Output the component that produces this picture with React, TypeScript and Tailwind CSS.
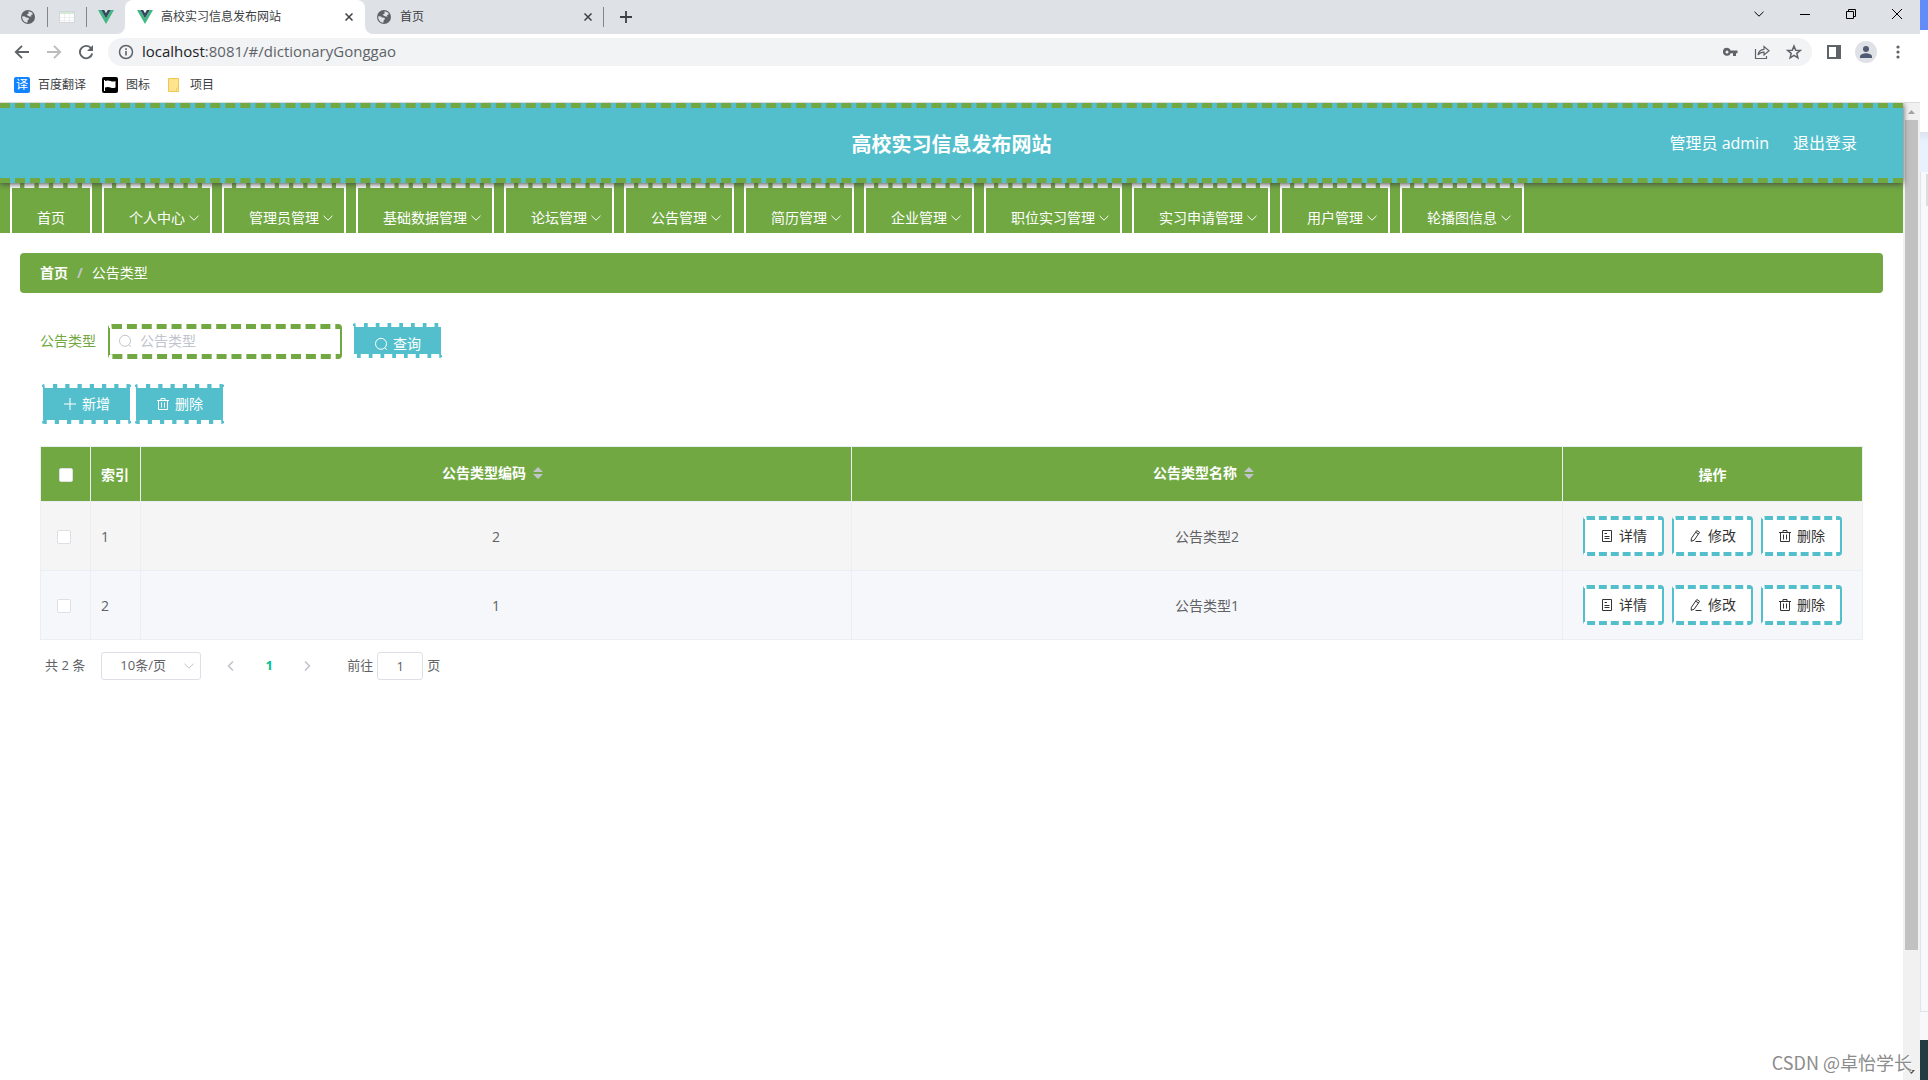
import React from "react";

type IconProps = { className?: string };

const stroke = {
  fill: "none",
  stroke: "currentColor",
  strokeLinecap: "butt" as const,
  strokeLinejoin: "miter" as const,
};

/* ---------- browser icons ---------- */

const Globe = ({ className = "size-4" }: IconProps) => (
  <svg viewBox="0 0 16 16" className={className} aria-hidden="true">
    <circle cx="8" cy="8" r="7" fill="#5f6368" />
    <path
      d="M2.200 7.200 5 7.400 6 8.600 8.400 8.800 9 10 7.600 11.600 7.400 13.800C4.500 13.600 2.200 11 2.200 8ZM8.500 2.200 11.500 3.200 13 5 11 6.200 11.500 7.400 9.500 7.600 7.600 6.400 6.600 5.800 8.600 4.600Z"
      fill="#dee1e6"
    />
  </svg>
);

const Vue = ({ className = "size-4" }: IconProps) => (
  <svg viewBox="0 0 16 16" className={className} aria-hidden="true">
    <path d="M0 1h3.200L8 9.300 12.800 1H16L8 15Z" fill="#41b883" />
    <path d="M3.200 1H6.200L8 4.200 9.800 1h3L8 9.300Z" fill="#35495e" />
  </svg>
);

const Sheet = () => (
  <svg viewBox="0 0 16 16" className="size-4" aria-hidden="true">
    <rect x="0.500" y="2.500" width="15" height="11" fill="#fff" stroke="#d3d6da" />
    <rect x="1" y="3" width="14" height="2" fill="#d3e8d5" />
    <path d="M1 8.500h14M1 11.500h14M5.500 5v8M10.500 5v8" stroke="#eceef0" fill="none" />
  </svg>
);

const Cross = ({ className = "size-2" }: IconProps) => (
  <svg viewBox="0 0 8 8" className={className} aria-hidden="true">
    <path d="M0.500 0.500 7.500 7.500M7.500 0.500 0.500 7.500" {...stroke} strokeWidth="1.500" />
  </svg>
);

const Plus = () => (
  <svg viewBox="0 0 12 12" className="size-3" aria-hidden="true">
    <path d="M6 0v12M0 6h12" {...stroke} strokeWidth="1.800" />
  </svg>
);

const Arrow = ({ className = "size-4" }: IconProps) => (
  <svg viewBox="0 0 16 16" className={className} aria-hidden="true">
    <path d="M15 8H2.500M8 1.800 1.800 8 8 14.200" {...stroke} strokeWidth="1.900" />
  </svg>
);

const Reload = () => (
  <svg viewBox="0 0 16 16" className="size-4" aria-hidden="true">
    <path d="M13.200 4.500A6.200 6.200 0 1 0 14.200 9.500" {...stroke} strokeWidth="1.900" />
    <path d="M15 1v6H9Z" fill="currentColor" />
  </svg>
);

const Info = () => (
  <svg viewBox="0 0 16 16" className="size-4" aria-hidden="true">
    <circle cx="8" cy="8" r="6.500" {...stroke} strokeWidth="1.500" />
    <path d="M8 7v4.500M8 4.300v1.700" {...stroke} strokeWidth="1.600" />
  </svg>
);

const Key = () => (
  <svg viewBox="0 0 16 16" className="size-4" aria-hidden="true">
    <path
      fillRule="evenodd"
      d="M5 3.800a4 4 0 1 0 3.700 5.400H11V12h3V9.200h1.500V6.600H8.700A4 4 0 0 0 5 3.800Zm0 2.600a1.500 1.500 0 1 1 0 3 1.500 1.500 0 0 1 0-3Z"
      fill="currentColor"
    />
  </svg>
);

const Share = () => (
  <svg viewBox="0 0 16 16" className="size-4" aria-hidden="true">
    <path d="M1.500 5v9.500h11V12" {...stroke} strokeWidth="1.200" />
    <path d="M4 11C4.500 7.500 6.500 5.500 10 5.300V2.500L15 6.800 10 11V8.200C7.500 8.200 5.500 9 4 11Z" {...stroke} strokeWidth="1.200" />
  </svg>
);

const Star = () => (
  <svg viewBox="0 0 16 16" className="size-4" aria-hidden="true">
    <path d="M8 2 9.700 6.200 14.300 6.500 10.800 9.400 11.900 13.800 8 11.400 4.100 13.800 5.200 9.400 1.700 6.500 6.300 6.200Z" {...stroke} strokeWidth="1.500" />
  </svg>
);

const SidePanel = () => (
  <svg viewBox="0 0 14 14" className="size-3.5" aria-hidden="true">
    <path fillRule="evenodd" d="M0 0h14v14H0ZM2 2v10h7V2Z" fill="currentColor" />
  </svg>
);

const Avatar = () => (
  <svg viewBox="0 0 22 22" className="size-[22px]" aria-hidden="true">
    <circle cx="11" cy="11" r="11" fill="#dee1e6" />
    <circle cx="11" cy="8" r="3" fill="#4f5b73" />
    <path d="M5 17v-1.500C5 13 9 12.200 11 12.200s6 .8 6 3.300V17Z" fill="#4f5b73" />
  </svg>
);

const Dots = () => (
  <svg viewBox="0 0 4 14" className="h-3.5 w-1" aria-hidden="true">
    <circle cx="2" cy="2" r="1.600" fill="currentColor" />
    <circle cx="2" cy="7" r="1.600" fill="currentColor" />
    <circle cx="2" cy="12" r="1.600" fill="currentColor" />
  </svg>
);

/* ---------- application icons ---------- */

const Chevron = ({ className = "size-3" }: IconProps) => (
  <svg viewBox="0 0 12 12" className={className} aria-hidden="true">
    <path d="M1.500 3.800 6 8.200 10.500 3.800" {...stroke} strokeWidth="1" />
  </svg>
);

const Search = () => (
  <svg viewBox="0 0 14 14" className="size-3.5 shrink-0" aria-hidden="true">
    <circle cx="7" cy="6.800" r="5.500" {...stroke} />
    <path d="M10.800 10.800 12.800 12.800" {...stroke} />
  </svg>
);

const Add = () => (
  <svg viewBox="0 0 14 14" className="size-3.5 shrink-0" aria-hidden="true">
    <path d="M7 1v12M1 7h12" {...stroke} />
  </svg>
);

const Trash = () => (
  <svg viewBox="0 0 14 14" className="size-3.5 shrink-0" aria-hidden="true">
    <path d="M1 3.500h12M2.500 3.500v9h9v-9M5 3.500v-2h4v2M5.500 5.500v5M8.500 5.500v5" {...stroke} />
  </svg>
);

const Doc = () => (
  <svg viewBox="0 0 14 14" className="size-3.5 shrink-0" aria-hidden="true">
    <path d="M2.500 1.500h9v11h-9ZM4.500 4.500h2.500M4.500 7.500h5M4.500 9.500h5" {...stroke} />
  </svg>
);

const Edit = () => (
  <svg viewBox="0 0 14 14" className="size-3.5 shrink-0" aria-hidden="true">
    <path d="M7.800 1.500 10.600 3.300 5.200 11.200 2.200 12.300 2.400 9.300ZM6.700 3.200 9.500 5M6.500 12.500h6" {...stroke} />
  </svg>
);

/* ---------- data ---------- */

const menus = [
  "个人中心",
  "管理员管理",
  "基础数据管理",
  "论坛管理",
  "公告管理",
  "简历管理",
  "企业管理",
  "职位实习管理",
  "实习申请管理",
  "用户管理",
  "轮播图信息",
];

const rows = [
  { id: 1, code: "2", name: "公告类型2" },
  { id: 2, code: "1", name: "公告类型1" },
];

/* ---------- browser frame ---------- */

function TabStrip() {
  return (
    <div className="flex h-[34px] items-center bg-[#dee1e6] text-xs text-[#3c4043]">
      <button aria-label="标签页 1" className="flex w-[47px] justify-center pl-2">
        <Globe />
      </button>
      <span className="h-5 w-px bg-[#80868b]" />
      <button aria-label="标签页 2" className="flex w-[38px] justify-center">
        <Sheet />
      </button>
      <span className="h-5 w-px bg-[#80868b]" />
      <button aria-label="标签页 3" className="flex w-[38px] justify-center">
        <Vue />
      </button>
      <div className="relative flex h-full w-60 items-center rounded-t-lg bg-white px-3">
        <span className="absolute bottom-0 -left-2 size-2 bg-white">
          <span className="block size-2 rounded-br-lg bg-[#dee1e6]" />
        </span>
        <Vue />
        <span className="ml-2 flex-1">高校实习信息发布网站</span>
        <button aria-label="关闭标签页" className="text-[#3c4043]">
          <Cross />
        </button>
        <span className="absolute -right-2 bottom-0 size-2 bg-white">
          <span className="block size-2 rounded-bl-lg bg-[#dee1e6]" />
        </span>
      </div>
      <div className="flex h-full w-[238px] items-center px-[11px]">
        <Globe />
        <span className="ml-2 flex-1">首页</span>
        <button aria-label="关闭标签页">
          <Cross />
        </button>
      </div>
      <span className="h-5 w-px bg-[#80868b]" />
      <button aria-label="新标签页" className="ml-4">
        <Plus />
      </button>
      <div className="mb-1.5 ml-auto flex text-black">
        <button aria-label="搜索标签页" className="flex w-[46px] items-center justify-center">
          <Chevron />
        </button>
        <button aria-label="最小化" className="flex w-[46px] items-center justify-center">
          <svg viewBox="0 0 10 10" className="size-2.5" aria-hidden="true">
            <path d="M0 5.500h10" {...stroke} />
          </svg>
        </button>
        <button aria-label="还原" className="flex w-[46px] items-center justify-center">
          <svg viewBox="0 0 10 10" className="size-2.5" aria-hidden="true">
            <path d="M0.500 2.500h7v7h-7ZM2.500 2.500v-2h7v7h-2" {...stroke} />
          </svg>
        </button>
        <button aria-label="关闭" className="flex w-[46px] items-center justify-center">
          <svg viewBox="0 0 10 10" className="size-2.5" aria-hidden="true">
            <path d="M0 0 10 10M10 0 0 10" {...stroke} />
          </svg>
        </button>
      </div>
    </div>
  );
}

function Toolbar() {
  return (
    <div className="flex h-9 items-center bg-white pr-5 pl-3.5 text-[#5f6368]">
      <button aria-label="后退">
        <Arrow />
      </button>
      <button aria-label="前进" className="ml-4 text-[#babcbe]">
        <Arrow className="size-4 rotate-180" />
      </button>
      <button aria-label="重新加载" className="ml-4">
        <Reload />
      </button>
      <div className="ml-3.5 flex h-7 flex-1 items-center rounded-full bg-[#f1f3f4] px-2.5">
        <Info />
        <a href="#/dictionaryGonggao" className="ml-2 flex-1 pb-0.5 text-[15px] leading-5">
          <span className="text-[#202124]">localhost</span>:8081/#/dictionaryGonggao
        </a>
        <div className="flex gap-4">
          <button aria-label="密码">
            <Key />
          </button>
          <button aria-label="分享">
            <Share />
          </button>
          <button aria-label="收藏">
            <Star />
          </button>
        </div>
      </div>
      <button aria-label="侧边栏" className="ml-[15px]">
        <SidePanel />
      </button>
      <button aria-label="用户" className="ml-3.5">
        <Avatar />
      </button>
      <button aria-label="更多" className="ml-[19px]">
        <Dots />
      </button>
    </div>
  );
}

function Bookmarks() {
  return (
    <div className="relative z-20 flex h-[33px] items-center border-b border-[#d9dbdd] bg-white pb-0.5 pl-3.5 text-xs text-[#3c4043]">
      <a href="#fanyi" className="flex items-center gap-2">
        <span className="flex size-4 items-center justify-center rounded-xs bg-[#1283ff] text-xs text-white">译</span>
        百度翻译
      </a>
      <a href="#icons" className="ml-4 flex items-center gap-2">
        <svg viewBox="0 0 16 16" className="size-4" aria-hidden="true">
          <rect width="16" height="16" rx="2" fill="#000" />
          <path d="M2.500 3v11" stroke="#fff" />
          <path d="M3 4Q6 3 8.500 4 11 5 13.500 4v6.500Q11 11.500 8.500 10.500 6 9.500 3 10.500Z" fill="#fff" />
        </svg>
        图标
      </a>
      <a href="#projects" className="ml-4 flex items-center gap-2">
        <svg viewBox="0 0 16 16" className="size-4" aria-hidden="true">
          <path d="M2.500 1.500h10v13h-10Z" fill="#ffe38f" stroke="#efc850" />
          <path d="M10.500 14.500v-3l2-1v4Z" fill="#fff0b8" stroke="#efc850" />
        </svg>
        项目
      </a>
    </div>
  );
}

/* ---------- page ---------- */

const navItem =
  "flex h-[50px] items-center border-x-2 border-t-[5px] border-x-white border-t-white [border-top-style:dashed] pt-[15px] pl-[25px] text-sm text-white";

function SiteHeader() {
  return (
    <header className="relative z-10 grid h-20 grid-cols-[1fr_auto_1fr] items-center border-y-[5px] border-dashed border-[#71a842] bg-[#54bfcc] text-base text-white shadow-[0_1px_6px_#444]">
      <span />
      <h1 className="pt-1 text-xl font-bold">高校实习信息发布网站</h1>
      <div className="flex justify-end gap-6 pr-[46px]">
        <span>管理员 admin</span>
        <a href="#/login">退出登录</a>
      </div>
    </header>
  );
}

function SiteNav() {
  return (
    <nav className="flex gap-2.5 bg-[#71a842] px-2.5">
      <a href="#/" className={navItem + " pr-[25px]"}>
        首页
      </a>
      {menus.map((m) => (
        <button key={m} className={navItem + " pr-2.5"}>
          <span className="mr-[3px] whitespace-nowrap">{m}</span>
          <Chevron />
        </button>
      ))}
    </nav>
  );
}

const solidBtn =
  "flex items-center gap-[5px] rounded border-x-2 border-y-4 border-white bg-[#54bfcc] px-5 text-sm text-white [border-block-style:dashed]";

function ActionButton({ icon, label }: { icon: React.ReactNode; label: string }) {
  return (
    <button className="flex h-10 items-center gap-[5px] rounded border-x-2 border-y-4 border-[#54bfcc] bg-white px-[15px] text-[#333] [border-block-style:dashed]">
      {icon}
      {label}
    </button>
  );
}

const checkbox = "block size-3.5 appearance-none rounded-xs border border-[#dcdfe6] bg-white";
const headCell = "h-[55px] border-r border-b border-[#ebeef5] font-bold";
const bodyCell = "h-[69px] border-r border-b border-[#ebeef5]";

function SortHead({ label }: { label: string }) {
  return (
    <span className="flex items-center justify-center">
      {label}
      <button aria-label={label + "排序"} className="flex w-6 justify-center">
        <svg viewBox="0 0 10 12" className="h-3 w-2.5" aria-hidden="true">
          <path d="M0 5 5 0l5 5ZM0 7h10L5 12Z" fill="#c0c4cc" />
        </svg>
      </button>
    </span>
  );
}

function DataTable() {
  return (
    <table className="mt-[22px] w-full table-fixed border-separate border-spacing-0 border-t border-l border-[#ebeef5] text-sm text-[#606266]">
      <colgroup>
        <col className="w-[50px]" />
        <col className="w-[50px]" />
        <col />
        <col />
        <col className="w-[300px]" />
      </colgroup>
      <thead className="bg-[#71a842] text-white">
        <tr>
          <th className={headCell + " pt-0.5 pl-[18px]"}>
            <input type="checkbox" aria-label="全选" className={checkbox} />
          </th>
          <th className={headCell + " pt-0.5 pl-2.5 text-left"}>索引</th>
          <th className={headCell + " pb-0.5"}>
            <SortHead label="公告类型编码" />
          </th>
          <th className={headCell + " pb-0.5"}>
            <SortHead label="公告类型名称" />
          </th>
          <th className={headCell + " pt-0.5"}>操作</th>
        </tr>
      </thead>
      <tbody>
        {rows.map((r) => (
          <tr key={r.id} className="odd:bg-[#f5f5f5] even:bg-[#f5f7fa]">
            <td className={bodyCell + " pt-0.5 pl-4"}>
              <input type="checkbox" aria-label={"选择第" + r.id + "行"} className={checkbox} />
            </td>
            <td className={bodyCell + " pt-0.5 pl-2.5"}>{r.id}</td>
            <td className={bodyCell + " pt-0.5 text-center"}>{r.code}</td>
            <td className={bodyCell + " pt-0.5 text-center"}>{r.name}</td>
            <td className={bodyCell}>
              <div className="flex justify-center gap-2">
                <ActionButton icon={<Doc />} label="详情" />
                <ActionButton icon={<Edit />} label="修改" />
                <ActionButton icon={<Trash />} label="删除" />
              </div>
            </td>
          </tr>
        ))}
      </tbody>
    </table>
  );
}

function Pagination() {
  return (
    <div className="mt-3 flex h-7 items-center pl-[5px] text-[13px] text-[#606266]">
      <span>共 2 条</span>
      <div className="relative ml-4 text-[#606266]">
        <select
          aria-label="每页条数"
          className="h-7 w-[100px] appearance-none rounded-[3px] border border-[#dcdfe6] bg-white pr-5 pl-1 text-center"
        >
          <option>10条/页</option>
        </select>
        <Chevron className="pointer-events-none absolute top-2 right-1.5 size-3 text-[#c0c4cc]" />
      </div>
      <button aria-label="上一页" className="ml-6 text-[#c0c4cc]">
        <svg viewBox="0 0 12 12" className="size-3" aria-hidden="true">
          <path d="M8 1.500 3.500 6 8 10.500" {...stroke} strokeWidth="1.600" />
        </svg>
      </button>
      <button className="ml-[26px] w-3 text-center font-bold text-[#00c292]">1</button>
      <button aria-label="下一页" className="ml-[26px] text-[#c0c4cc]">
        <svg viewBox="0 0 12 12" className="size-3" aria-hidden="true">
          <path d="M4 1.500 8.500 6 4 10.500" {...stroke} strokeWidth="1.600" />
        </svg>
      </button>
      <label htmlFor="jump" className="ml-[34px]">
        前往
      </label>
      <input
        id="jump"
        defaultValue="1"
        className="mx-1 h-7 w-[46px] rounded-[3px] border border-[#dcdfe6] text-center"
      />
      <span>页</span>
    </div>
  );
}

function Page() {
  return (
    <div className="relative flex-1 bg-white">
      <SiteHeader />
      <SiteNav />
      <div className="mx-5 mt-5 flex h-10 items-center rounded bg-[#71a842] px-5 text-sm text-white">
        <a href="#/" className="font-bold">
          首页
        </a>
        <span className="mx-[9px] font-bold text-[#c0c4cc]">/</span>
        <span>公告类型</span>
      </div>
      <main className="mt-[30px] px-10">
        <form className="flex h-9 items-end text-sm">
          <label htmlFor="type" className="pb-2 text-[#71a842]">
            公告类型
          </label>
          <div className="ml-3 flex h-[35px] w-[234px] items-center gap-2 rounded border-x-2 border-y-[5px] border-[#71a842] bg-white pb-0.5 pl-2 text-[#c0c4cc] [border-block-style:dashed]">
            <Search />
            <input
              id="type"
              placeholder="公告类型"
              className="w-full min-w-0 flex-1 text-[#606266] outline-none placeholder:text-[#c0c4cc]"
            />
          </div>
          <button type="button" className={solidBtn + " ml-2.5 h-[35px] self-start pt-[6px]"}>
            <Search />
            查询
          </button>
        </form>
        <div className="mt-[25px] flex gap-0.5 pl-px">
          <button className={solidBtn + " h-10"}>
            <Add />
            新增
          </button>
          <button className={solidBtn + " h-10"}>
            <Trash />
            删除
          </button>
        </div>
        <DataTable />
        <Pagination />
      </main>
    </div>
  );
}

function ScrollBar() {
  return (
    <div className="flex w-[17px] flex-col items-center bg-[#f1f1f1]" aria-hidden="true">
      <svg viewBox="0 0 17 17" className="size-[17px]">
        <path d="M5 11h7L8.500 7Z" fill="#a3a3a3" />
      </svg>
      <div className="h-[85%] w-[13px] bg-[#c1c1c1]" />
      <svg viewBox="0 0 17 17" className="mt-auto size-[17px]">
        <path d="M5 7h7L8.500 11Z" fill="#505050" />
      </svg>
    </div>
  );
}

export default function App() {
  return (
    <div className="relative flex h-screen overflow-hidden bg-white font-['Open_Sans','Noto_Sans_CJK_SC',sans-serif]">
      <div className="flex min-w-0 flex-1 flex-col">
        <TabStrip />
        <Toolbar />
        <Bookmarks />
        <div className="flex flex-1">
          <Page />
          <ScrollBar />
        </div>
      </div>
      <div className="flex w-2 flex-col" aria-hidden="true">
        <div className="h-[30px] bg-[#628cf8]" />
        <div className="h-[102px] bg-white" />
        <div className="h-10 bg-linear-to-b from-[#dde3f0] via-[#e9f0fe] via-25% to-[#e9f0fe]" />
        <div className="flex flex-1 justify-end border-b border-l border-[#e0e3ec] bg-[#f7f8fa] pt-0.5">
          <span className="h-8 w-0.5 bg-[#dadde3]" />
        </div>
        <div className="h-7 bg-[#f7f8fa]" />
        <div className="h-10 bg-[#233b43]" />
      </div>
      <div className="absolute right-4 bottom-1 font-['Noto_Sans_CJK_SC',sans-serif] text-lg text-[#8c8c8c] [text-shadow:1px_1px_0_#fff]">
        CSDN @卓怡学长
      </div>
    </div>
  );
}
